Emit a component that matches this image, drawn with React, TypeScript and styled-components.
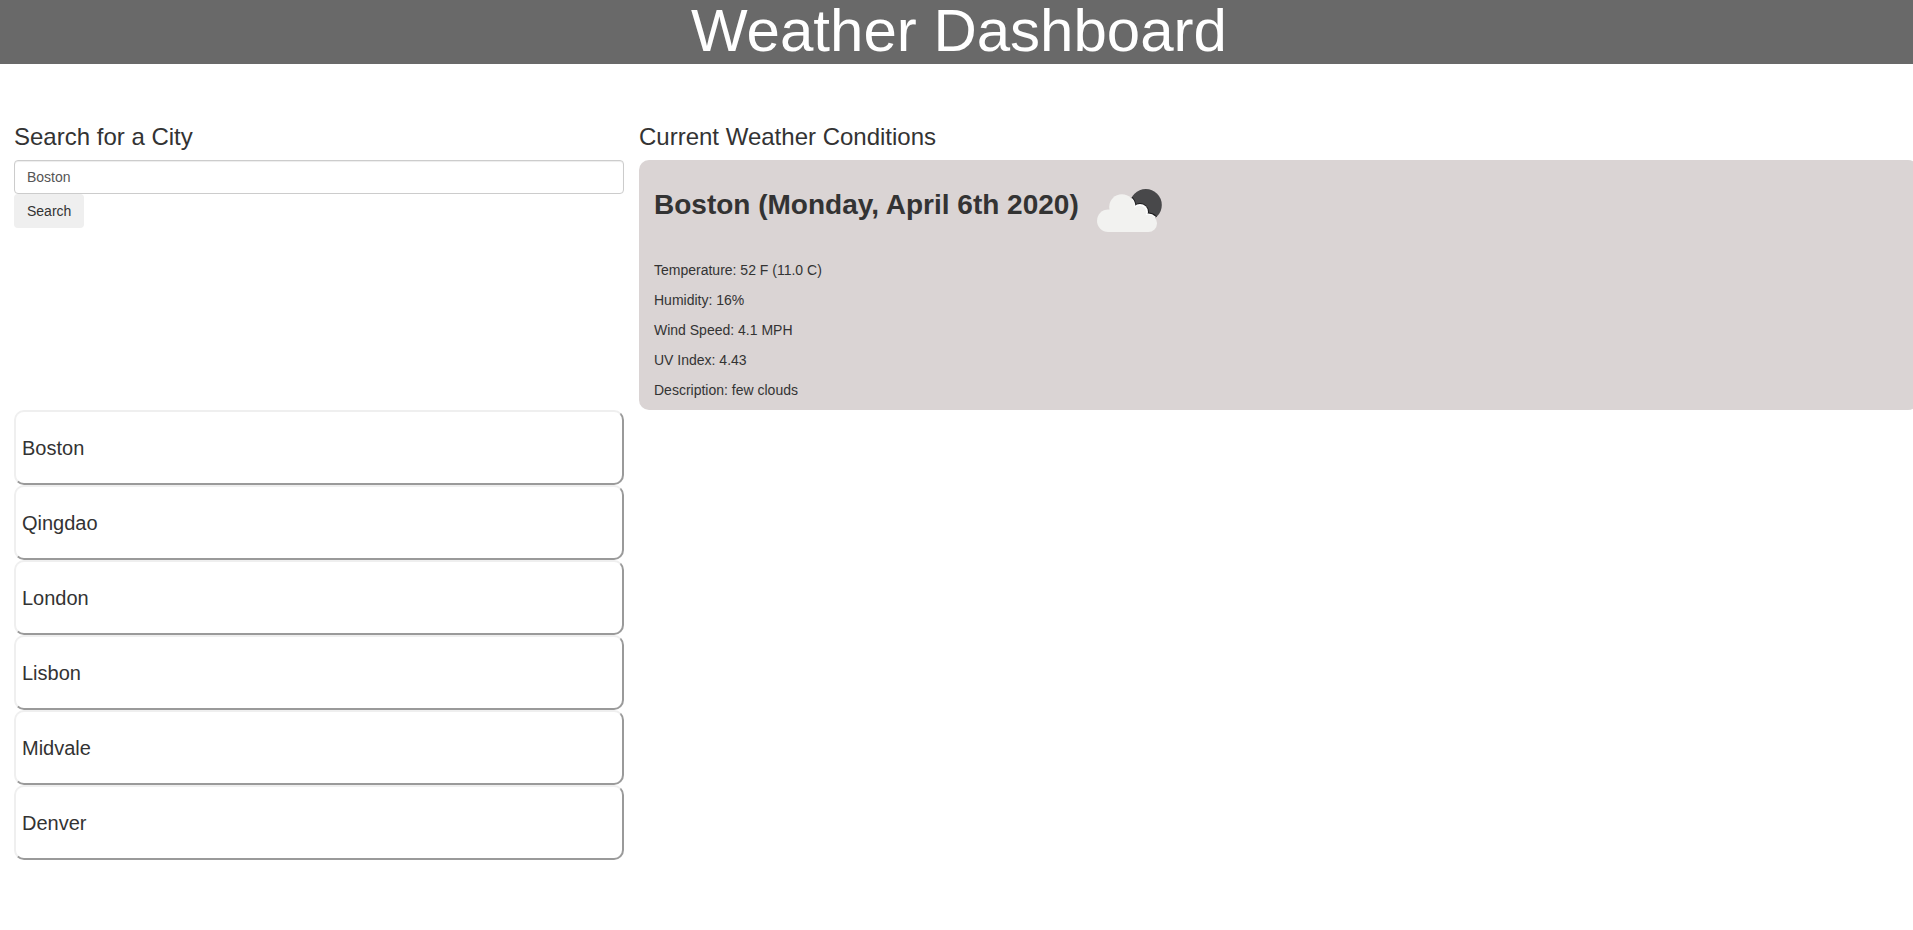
import React, { useState } from "react";
import styled, { createGlobalStyle } from "styled-components";

const GlobalStyle = createGlobalStyle`
  *, *::before, *::after { box-sizing: border-box; }
  body {
    margin: 0;
    overflow: hidden;
    background: #fff;
    color: #333;
    font: 14px/20px "Liberation Sans", Arial, sans-serif;
  }
`;

const Banner = styled.header`
  height: 64px;
  padding-left: 5px;
  background: #696969;
  color: #fff;
  text-align: center;
`;

const BannerTitle = styled.h1`
  margin: 0;
  font-size: 60px;
  font-weight: 400;
  line-height: 62px;
`;

const Columns = styled.main`
  display: grid;
  grid-template-columns: 610px 1279px;
  column-gap: 15px;
  padding: 59px 0 0 14px;
`;

const SectionTitle = styled.h3`
  margin: 0 0 10px;
  font-size: 24px;
  font-weight: 400;
  line-height: 27px;
`;

const SearchForm = styled.form`
  display: flex;
  flex-direction: column;
  align-items: flex-start;
  height: 250px;
`;

const CityInput = styled.input`
  width: 100%;
  height: 34px;
  padding: 6px 12px;
  border: 1px solid #ccc;
  border-radius: 4px;
  box-shadow: inset 0 1px 1px rgba(0, 0, 0, 0.075);
  color: #555;
  font: inherit;
`;

const SearchButton = styled.button`
  height: 34px;
  padding: 6px 12px;
  border: 1px solid transparent;
  border-radius: 4px;
  background: #efefef;
  color: #333;
  font: inherit;
`;

const CityList = styled.div`
  display: flex;
  flex-direction: column;
`;

const CityButton = styled.button`
  height: 75px;
  padding: 0 6px;
  border: 2px solid;
  border-color: #efefef #9a9a9a #9a9a9a #efefef;
  border-radius: 10px;
  background: #fff;
  color: #333;
  font: inherit;
  font-size: 20px;
  text-align: left;
`;

const WeatherCard = styled.article`
  height: 250px;
  padding: 0 15px;
  border-radius: 10px;
  background: #dad4d4;
`;

const CardHeading = styled.div`
  display: flex;
  align-items: center;
  height: 90px;
  padding-bottom: 2px;
  margin-bottom: 10px;
`;

const CityName = styled.h2`
  margin: 0 18px 0 0;
  font-size: 28px;
  font-weight: 700;
  line-height: 33px;
`;

const CloudIcon = styled.svg`
  display: block;
  margin-top: 12px;
`;

const Reading = styled.p`
  margin: 0 0 10px;
`;

const cities = ["Boston", "Qingdao", "London", "Lisbon", "Midvale", "Denver"];

const readings = [
  "Temperature: 52 F (11.0 C)",
  "Humidity: 16%",
  "Wind Speed: 4.1 MPH",
  "UV Index: 4.43",
  "Description: few clouds",
];

function FewClouds() {
  return (
    <CloudIcon width="66" height="45" viewBox="0 0 66 45" role="img" aria-label="few clouds">
      <defs>
        <clipPath id="disc">
          <circle cx="48.8" cy="17" r="16" />
        </clipPath>
      </defs>
      <circle cx="48.8" cy="17" r="16" fill="#48484a" />
      <g clipPath="url(#disc)" fill="#1c1c1e">
        <circle cx="24.9" cy="19" r="14.5" />
        <circle cx="43" cy="24" r="9" />
        <circle cx="51.3" cy="35.6" r="11" />
      </g>
      <g clipPath="url(#disc)" fill="#fff">
        <circle cx="24.9" cy="19" r="13.6" />
        <circle cx="43" cy="24" r="8" />
        <circle cx="51.3" cy="35.6" r="10" />
      </g>
      <g fill="#f2f2f0">
        <circle cx="11.3" cy="32.7" r="11.3" />
        <circle cx="24.9" cy="19" r="12.7" />
        <circle cx="42.5" cy="24.5" r="6.8" />
        <circle cx="51.3" cy="35.3" r="8.7" />
        <path d="M11.3 44V30L25 20H38L45 24L51.3 34V44Z" />
      </g>
    </CloudIcon>
  );
}

export default function App() {
  const [city, setCity] = useState("Boston");

  return (
    <>
      <GlobalStyle />
      <Banner>
        <BannerTitle>Weather Dashboard</BannerTitle>
      </Banner>
      <Columns>
        <section>
          <SectionTitle>Search for a City</SectionTitle>
          <SearchForm onSubmit={(event) => event.preventDefault()}>
            <CityInput value={city} onChange={(event) => setCity(event.target.value)} />
            <SearchButton type="submit">Search</SearchButton>
          </SearchForm>
          <CityList>
            {cities.map((name) => (
              <CityButton key={name} onClick={() => setCity(name)}>
                {name}
              </CityButton>
            ))}
          </CityList>
        </section>
        <section>
          <SectionTitle>Current Weather Conditions</SectionTitle>
          <WeatherCard>
            <CardHeading>
              <CityName>Boston (Monday, April 6th 2020)</CityName>
              <FewClouds />
            </CardHeading>
            {readings.map((text) => (
              <Reading key={text}>{text}</Reading>
            ))}
          </WeatherCard>
        </section>
      </Columns>
    </>
  );
}
